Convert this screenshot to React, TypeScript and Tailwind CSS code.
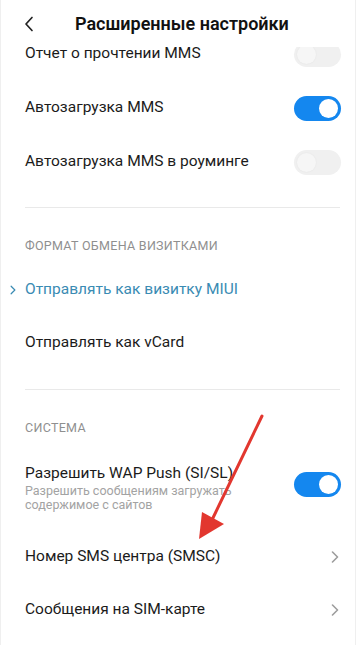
import React from "react";

const font = { fontFamily: "Roboto, 'Noto Sans', sans-serif" };

function Toggle({ on }: { on: boolean }) {
  return on ? (
    <div className="w-[47px] h-[25px] rounded-full bg-[#1487ef] flex items-center justify-end pr-[3px]">
      <div className="w-[19px] h-[19px] rounded-full bg-white" />
    </div>
  ) : (
    <div className="w-[47px] h-[25px] rounded-full bg-[#f0f0f0] flex items-center pl-[3px]">
      <div className="w-[19px] h-[19px] rounded-full bg-[#f6f6f6] shadow-[0_0_2px_rgba(0,0,0,0.06)]" />
    </div>
  );
}

function Chevron({ className }: { className?: string }) {
  return (
    <svg width="8" height="12" viewBox="0 0 8 12" className={className}>
      <path d="M1.5 1 L6.5 6 L1.5 11" fill="none" stroke="currentColor" strokeWidth="1.6" strokeLinecap="round" strokeLinejoin="round" />
    </svg>
  );
}

function ToggleRow({ label, on }: { label: string; on: boolean }) {
  return (
    <div className="h-[54px] flex items-center justify-between pl-[24px] pr-[14px]">
      <span className="text-[15.5px] text-[#1b1b1b]">{label}</span>
      <Toggle on={on} />
    </div>
  );
}

function LinkRow({ label }: { label: string }) {
  return (
    <div className="h-[53px] flex items-center justify-between pl-[24px] pr-[16px]">
      <span className="text-[15.5px] text-[#1b1b1b]">{label}</span>
      <Chevron className="text-[#9d9d9d]" />
    </div>
  );
}

function Section({ title }: { title: string }) {
  return (
    <div className="h-[55px] pl-[24px] pt-[31px]">
      <div className="text-[12.5px] leading-[14px] tracking-[0.3px] text-[#8f8f8f] uppercase">{title}</div>
    </div>
  );
}

export default function App() {
  return (
    <div className="w-[356px] h-[645px] bg-white overflow-hidden flex flex-col border-x border-[#efefef]" style={font}>
      <div className="h-[47px] shrink-0 flex items-center bg-white relative z-10">
        <svg width="10" height="16" viewBox="0 0 10 16" className="ml-[23px] text-[#222]">
          <path d="M8 1.5 L2 8 L8 14.5" fill="none" stroke="currentColor" strokeWidth="1.7" strokeLinecap="round" strokeLinejoin="round" />
        </svg>
        <span className="ml-[41px] text-[18px] font-semibold text-[#111]">Расширенные настройки</span>
      </div>

      <div className="flex-1 overflow-hidden relative">
        <div className="-mt-[20px]">
          <ToggleRow label="Отчет о прочтении MMS" on={false} />
          <ToggleRow label="Автозагрузка MMS" on={true} />
          <ToggleRow label="Автозагрузка MMS в роуминге" on={false} />
          <div className="h-[18px]" />
          <div className="ml-[24px] mr-[15px] h-px bg-[#e9e9e9]" />

          <Section title="Формат обмена визитками" />
          <div className="h-[53px] flex items-center">
            <Chevron className="text-[#3a8bb3] ml-[9px] w-[6px] h-[10px]" />
            <span className="ml-[9px] text-[15.5px] text-[#3a8bb3]">Отправлять как визитку MIUI</span>
          </div>
          <div className="h-[53px] flex items-center pl-[24px]">
            <span className="text-[15.5px] text-[#1b1b1b]">Отправлять как vCard</span>
          </div>
          <div className="h-[20px]" />
          <div className="ml-[24px] mr-[15px] h-px bg-[#e9e9e9]" />

          <Section title="Система" />
          <div className="h-[85px] flex items-start justify-between pl-[24px] pr-[14px] pt-[18px]">
            <div className="flex flex-col">
              <span className="text-[15.5px] leading-[20px] text-[#1b1b1b]">Разрешить WAP Push (SI/SL)</span>
              <span className="text-[12.5px] leading-[14px] text-[#a3a3a3] mt-[1px]">
                Разрешить сообщениям загружать
                <br />
                содержимое с сайтов
              </span>
            </div>
            <div className="mt-[9px]">
              <Toggle on={true} />
            </div>
          </div>
          <LinkRow label="Номер SMS центра (SMSC)" />
          <LinkRow label="Сообщения на SIM-карте" />
        </div>

        <svg className="absolute left-0 top-0 pointer-events-none" width="356" height="600" viewBox="0 47 356 600">
          <line x1="261" y1="416" x2="210" y2="522" stroke="#e2372f" strokeWidth="3" strokeLinecap="round" />
          <polygon points="201,512 223,524 198,539" fill="#e2372f" />
        </svg>
      </div>
    </div>
  );
}
